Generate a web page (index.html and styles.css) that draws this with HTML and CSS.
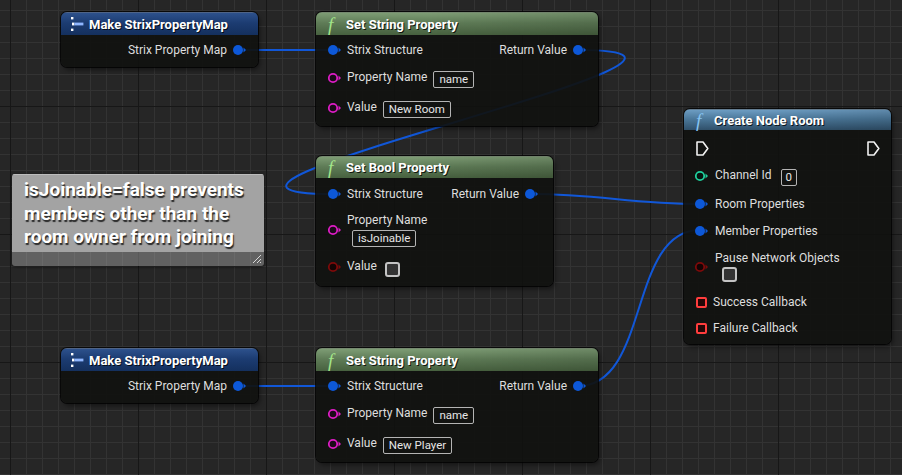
FILE: index.html
```html
<!DOCTYPE html>
<html lang="en">
<head>
    <meta charset="UTF-8">
    <title>Strix Room Graph</title>
    <link rel="stylesheet" href="styles.css">
</head>
<body>
<div class="graph">

    <!-- wires sit under the nodes -->
    <svg class="wires" width="902" height="475" viewBox="0 0 902 475">
        <path d="M237 50 L333 50"/>
        <path d="M578 50 C 808 50, 103 194, 333 194"/>
        <path d="M530 194 C 600 194, 630 204, 700 204"/>
        <path d="M578 386 C 650 386, 628 230, 700 230"/>
        <path d="M237 386 L333 386"/>
    </svg>

    <!-- comment -->
    <div class="comment">
        <div class="comment-text">isJoinable=false prevents<br>members other than the<br>room owner from joining</div>
        <div class="comment-bar">
            <svg width="12" height="12" viewBox="0 0 12 12"><path d="M11 3 L3 11 M11 7 L7 11 M11 10 L10 11" stroke="#d8d8d8" stroke-width="1"/></svg>
        </div>
    </div>

    <!-- Make StrixPropertyMap (top) -->
    <div class="node node-make-a">
        <div class="node-head head-make">
            <svg class="make-icon" width="14" height="16" viewBox="0 0 14 16">
                <rect x="1" y="1" width="2.4" height="2.4" fill="#fff"/>
                <rect x="2" y="6.6" width="2.4" height="2.8" fill="#fff"/>
                <rect x="1" y="12.6" width="2.4" height="2.4" fill="#fff"/>
                <rect x="4.4" y="6.6" width="9" height="2.8" fill="#8fb6ff"/>
            </svg>
            <span>Make StrixPropertyMap</span>
        </div>
        <div class="node-body">
            <div class="row row-end">
                <div class="pin-out">
                    <span>Strix Property Map</span>
                    <svg class="pin" width="16" height="12" viewBox="0 0 16 12"><circle cx="6" cy="6" r="5" fill="#0d58d8"/><path d="M11.5 3.5 L14 6 L11.5 8.5 Z" fill="#0d58d8"/></svg>
                </div>
            </div>
        </div>
    </div>

    <!-- Set String Property (room name) -->
    <div class="node node-set-a">
        <div class="node-head head-fn">
            <span class="fn-icon">f</span>
            <span>Set String Property</span>
        </div>
        <div class="node-body">
            <div class="row">
                <div class="pin-in">
                    <svg class="pin" width="16" height="12" viewBox="0 0 16 12"><circle cx="6" cy="6" r="5" fill="#0d58d8"/><path d="M11.5 3.5 L14 6 L11.5 8.5 Z" fill="#0d58d8"/></svg>
                    <span>Strix Structure</span>
                </div>
                <div class="pin-out">
                    <span>Return Value</span>
                    <svg class="pin" width="16" height="12" viewBox="0 0 16 12"><circle cx="6" cy="6" r="5" fill="#0d58d8"/><path d="M11.5 3.5 L14 6 L11.5 8.5 Z" fill="#0d58d8"/></svg>
                </div>
            </div>
            <div class="row">
                <div class="pin-in">
                    <svg class="pin" width="16" height="12" viewBox="0 0 16 12"><circle cx="6" cy="6" r="4.2" fill="#1a0a18" stroke="#dc1cc4" stroke-width="1.8"/><path d="M11.5 3.5 L14 6 L11.5 8.5 Z" fill="#dc1cc4"/></svg>
                    <span class="lift">Property Name</span>
                    <span class="field">name</span>
                </div>
            </div>
            <div class="row row-tall">
                <div class="pin-in">
                    <svg class="pin" width="16" height="12" viewBox="0 0 16 12"><circle cx="6" cy="6" r="4.2" fill="#1a0a18" stroke="#dc1cc4" stroke-width="1.8"/><path d="M11.5 3.5 L14 6 L11.5 8.5 Z" fill="#dc1cc4"/></svg>
                    <span class="lift">Value</span>
                    <span class="field">New Room</span>
                </div>
            </div>
        </div>
    </div>

    <!-- Set Bool Property -->
    <div class="node node-bool">
        <div class="node-head head-fn">
            <span class="fn-icon">f</span>
            <span>Set Bool Property</span>
        </div>
        <div class="node-body">
            <div class="row">
                <div class="pin-in">
                    <svg class="pin" width="16" height="12" viewBox="0 0 16 12"><circle cx="6" cy="6" r="5" fill="#0d58d8"/><path d="M11.5 3.5 L14 6 L11.5 8.5 Z" fill="#0d58d8"/></svg>
                    <span>Strix Structure</span>
                </div>
                <div class="pin-out">
                    <span>Return Value</span>
                    <svg class="pin" width="16" height="12" viewBox="0 0 16 12"><circle cx="6" cy="6" r="5" fill="#0d58d8"/><path d="M11.5 3.5 L14 6 L11.5 8.5 Z" fill="#0d58d8"/></svg>
                </div>
            </div>
            <div class="row row-stacked">
                <div class="pin-in">
                    <svg class="pin" width="16" height="12" viewBox="0 0 16 12"><circle cx="6" cy="6" r="4.2" fill="#1a0a18" stroke="#dc1cc4" stroke-width="1.8"/><path d="M11.5 3.5 L14 6 L11.5 8.5 Z" fill="#dc1cc4"/></svg>
                    <div class="stack">
                        <span>Property Name</span>
                        <span class="field field-indent">isJoinable</span>
                    </div>
                </div>
            </div>
            <div class="row row-check">
                <div class="pin-in">
                    <svg class="pin" width="16" height="12" viewBox="0 0 16 12"><circle cx="6" cy="6" r="4.2" fill="#140404" stroke="#7c0a0a" stroke-width="1.8"/><path d="M11.5 3.5 L14 6 L11.5 8.5 Z" fill="#7c0a0a"/></svg>
                    <span class="lift">Value</span>
                    <span class="check"></span>
                </div>
            </div>
        </div>
    </div>

    <!-- Make StrixPropertyMap (bottom) -->
    <div class="node node-make-b">
        <div class="node-head head-make">
            <svg class="make-icon" width="14" height="16" viewBox="0 0 14 16">
                <rect x="1" y="1" width="2.4" height="2.4" fill="#fff"/>
                <rect x="2" y="6.6" width="2.4" height="2.8" fill="#fff"/>
                <rect x="1" y="12.6" width="2.4" height="2.4" fill="#fff"/>
                <rect x="4.4" y="6.6" width="9" height="2.8" fill="#8fb6ff"/>
            </svg>
            <span>Make StrixPropertyMap</span>
        </div>
        <div class="node-body">
            <div class="row row-end">
                <div class="pin-out">
                    <span>Strix Property Map</span>
                    <svg class="pin" width="16" height="12" viewBox="0 0 16 12"><circle cx="6" cy="6" r="5" fill="#0d58d8"/><path d="M11.5 3.5 L14 6 L11.5 8.5 Z" fill="#0d58d8"/></svg>
                </div>
            </div>
        </div>
    </div>

    <!-- Set String Property (player name) -->
    <div class="node node-set-b">
        <div class="node-head head-fn">
            <span class="fn-icon">f</span>
            <span>Set String Property</span>
        </div>
        <div class="node-body">
            <div class="row">
                <div class="pin-in">
                    <svg class="pin" width="16" height="12" viewBox="0 0 16 12"><circle cx="6" cy="6" r="5" fill="#0d58d8"/><path d="M11.5 3.5 L14 6 L11.5 8.5 Z" fill="#0d58d8"/></svg>
                    <span>Strix Structure</span>
                </div>
                <div class="pin-out">
                    <span>Return Value</span>
                    <svg class="pin" width="16" height="12" viewBox="0 0 16 12"><circle cx="6" cy="6" r="5" fill="#0d58d8"/><path d="M11.5 3.5 L14 6 L11.5 8.5 Z" fill="#0d58d8"/></svg>
                </div>
            </div>
            <div class="row">
                <div class="pin-in">
                    <svg class="pin" width="16" height="12" viewBox="0 0 16 12"><circle cx="6" cy="6" r="4.2" fill="#1a0a18" stroke="#dc1cc4" stroke-width="1.8"/><path d="M11.5 3.5 L14 6 L11.5 8.5 Z" fill="#dc1cc4"/></svg>
                    <span class="lift">Property Name</span>
                    <span class="field">name</span>
                </div>
            </div>
            <div class="row row-tall">
                <div class="pin-in">
                    <svg class="pin" width="16" height="12" viewBox="0 0 16 12"><circle cx="6" cy="6" r="4.2" fill="#1a0a18" stroke="#dc1cc4" stroke-width="1.8"/><path d="M11.5 3.5 L14 6 L11.5 8.5 Z" fill="#dc1cc4"/></svg>
                    <span class="lift">Value</span>
                    <span class="field">New Player</span>
                </div>
            </div>
        </div>
    </div>

    <!-- Create Node Room -->
    <div class="node node-room">
        <div class="node-head head-call">
            <span class="fn-icon fn-blue">f</span>
            <span>Create Node Room</span>
        </div>
        <div class="node-body">
            <div class="row row-26 row-exec">
                <svg width="13" height="15" viewBox="0 0 13 15"><path d="M1 1 H7 L11.8 7.5 L7 14 H1 Z" fill="none" stroke="#f2f2f2" stroke-width="1.6" stroke-linejoin="round"/></svg>
                <svg width="13" height="15" viewBox="0 0 13 15"><path d="M1 1 H7 L11.8 7.5 L7 14 H1 Z" fill="none" stroke="#f2f2f2" stroke-width="1.6" stroke-linejoin="round"/></svg>
            </div>
            <div class="row row-26">
                <div class="pin-in">
                    <svg class="pin" width="16" height="12" viewBox="0 0 16 12"><circle cx="6" cy="6" r="4.2" fill="#06140f" stroke="#1fcf9c" stroke-width="1.8"/><path d="M11.5 3.5 L14 6 L11.5 8.5 Z" fill="#1fcf9c"/></svg>
                    <span class="lift">Channel Id</span>
                    <span class="field field-num">0</span>
                </div>
            </div>
            <div class="row row-26">
                <div class="pin-in">
                    <svg class="pin" width="16" height="12" viewBox="0 0 16 12"><circle cx="6" cy="6" r="5" fill="#0d58d8"/><path d="M11.5 3.5 L14 6 L11.5 8.5 Z" fill="#0d58d8"/></svg>
                    <span>Room Properties</span>
                </div>
            </div>
            <div class="row">
                <div class="pin-in">
                    <svg class="pin" width="16" height="12" viewBox="0 0 16 12"><circle cx="6" cy="6" r="5" fill="#0d58d8"/><path d="M11.5 3.5 L14 6 L11.5 8.5 Z" fill="#0d58d8"/></svg>
                    <span>Member Properties</span>
                </div>
            </div>
            <div class="row row-pause">
                <div class="pin-in">
                    <svg class="pin" width="16" height="12" viewBox="0 0 16 12"><circle cx="6" cy="6" r="4.2" fill="#140404" stroke="#7c0a0a" stroke-width="1.8"/><path d="M11.5 3.5 L14 6 L11.5 8.5 Z" fill="#7c0a0a"/></svg>
                    <div class="stack">
                        <span>Pause Network Objects</span>
                        <span class="check check-indent"></span>
                    </div>
                </div>
            </div>
            <div class="row">
                <div class="pin-in">
                    <span class="delegate"></span>
                    <span>Success Callback</span>
                </div>
            </div>
            <div class="row">
                <div class="pin-in">
                    <span class="delegate"></span>
                    <span>Failure Callback</span>
                </div>
            </div>
        </div>
    </div>

</div>
</body>
</html>
```

FILE: styles.css
```css
* { margin: 0; padding: 0; box-sizing: border-box; }
body { background: #262626; font-family: Roboto, "Noto Sans", sans-serif; color: #dedede; overflow: hidden; }

/* graph canvas: minor grid every 16px, major every 128px */
.graph {
    position: relative; width: 902px; height: 475px; overflow: hidden;
    background-color: #262626;
    background-image:
        linear-gradient(to right, #171717 1px, transparent 1px),
        linear-gradient(to bottom, #171717 1px, transparent 1px),
        linear-gradient(to right, #333333 1px, transparent 1px),
        linear-gradient(to bottom, #333333 1px, transparent 1px);
    background-size: 128px 128px, 128px 128px, 16px 16px, 16px 16px;
    background-position: 10px 106px, 10px 106px, 10px 10px, 10px 10px;
}
.wires { position: absolute; left: 0; top: 0; }
.wires path { fill: none; stroke: #1157d8; stroke-width: 2; }

/* comment box */
.comment { position: absolute; left: 12px; top: 174px; width: 252px; height: 92px; display: flex; flex-direction: column; border-radius: 3px; overflow: hidden; box-shadow: 0 1px 3px rgba(0, 0, 0, 0.6); }
.comment-text { flex: 1; background: #a3a3a3; border-top: 1px solid #bdbdbd; padding: 3px 4px 0 12px; font-weight: bold; font-size: 19px; line-height: 23.5px; color: #fff; text-shadow: 1px 2px 1px rgba(0, 0, 0, 0.75); white-space: nowrap; }
.comment-bar { height: 14px; background: rgba(170, 170, 170, 0.45); display: flex; justify-content: flex-end; align-items: flex-end; padding: 0 2px 2px 0; }

/* nodes */
.node { position: absolute; border-radius: 6px; overflow: hidden; background: rgba(16, 17, 15, 0.92); box-shadow: 0 0 0 1px rgba(0, 0, 0, 0.75), 2px 3px 5px rgba(0, 0, 0, 0.45); font-size: 12px; }
.node-make-a { left: 61px; top: 12px; width: 197px; height: 55px; }
.node-make-b { left: 61px; top: 348px; width: 197px; height: 55px; }
.node-set-a { left: 316px; top: 12px; width: 282px; height: 114px; }
.node-set-b { left: 316px; top: 348px; width: 282px; height: 114px; }
.node-bool { left: 316px; top: 156px; width: 237px; height: 130px; }
.node-room { left: 684px; top: 109px; width: 207px; height: 235px; }

.node-head { height: 23px; display: flex; align-items: center; gap: 8px; padding-left: 10px; font-weight: bold; font-size: 13px; color: #fff; text-shadow: 1px 1px 0 rgba(0, 0, 0, 0.8); border-top: 1px solid rgba(255, 255, 255, 0.25); }
.head-make { gap: 5px; padding-left: 9px; background: linear-gradient(180deg, #2d518c, #1c3c72 45%, #14305e); }
.head-fn { background: linear-gradient(90deg, rgba(0, 0, 0, 0) 40%, rgba(0, 0, 0, 0.12)), linear-gradient(180deg, #7d9c74, #5f7c57 45%, #47613f); }
.head-call { height: 21px; background: linear-gradient(90deg, rgba(0, 0, 0, 0) 40%, rgba(0, 0, 0, 0.12)), linear-gradient(180deg, #6c9cc2, #4b789a 45%, #30506a); }
.node-bool .node-head { height: 22px; }
.make-icon { flex: none; }
.fn-icon { font-family: "Liberation Serif", "DejaVu Serif", serif; font-style: italic; font-weight: normal; font-size: 19px; line-height: 1; color: #a2e58a; width: 10px; margin-left: 2px; text-shadow: none; }
.fn-blue { color: #86c4f2; }

.node-body { display: flex; flex-direction: column; gap: 4px; padding-top: 3px; }
.node-bool .node-body { padding-top: 4px; }
.node-room .node-body { gap: 2px; padding-top: 5px; }
.row { height: 24px; display: flex; align-items: center; justify-content: space-between; }
.row-end { justify-content: flex-end; }
.row-tall { height: 28px; }
.row-26 { height: 26px; }
.row-stacked { height: 40px; }
.row-check { height: 26px; }
.row-pause { height: 43px; }

.pin-in { display: flex; align-items: center; gap: 4px; padding-left: 11px; }
.pin-out { display: flex; align-items: center; gap: 5px; padding-right: 10px; }
.node-bool .pin-out { padding-right: 13px; }
.node-room .pin-in { padding-left: 10px; gap: 5px; }
.pin { flex: none; }
.lift { margin-bottom: 3px; }

.field { display: inline-block; height: 17px; line-height: 15px; padding: 0 5px; margin-top: 3px; margin-left: 2px; border: 1px solid #b4b4b4; border-radius: 2px; font-size: 11.5px; color: #e6e6e6; }
.field-indent { margin-left: 5px; margin-top: 1px; }
.field-num { margin-left: 4px; padding: 0 4px; }
.stack { display: flex; flex-direction: column; align-items: flex-start; gap: 2px; }

.check { display: inline-block; width: 15px; height: 15px; margin-left: 4px; margin-top: 4px; border: 2px solid #c4c4c4; border-radius: 3px; background: #333; }
.check-indent { margin-left: 7px; margin-top: 0; }

.row-exec { padding: 0 11px 0 12px; }
.delegate { display: inline-block; width: 11px; height: 11px; margin-left: 2px; margin-right: 1px; border: 2px solid #ff3d3d; border-radius: 2px; background: #240707; }
```
